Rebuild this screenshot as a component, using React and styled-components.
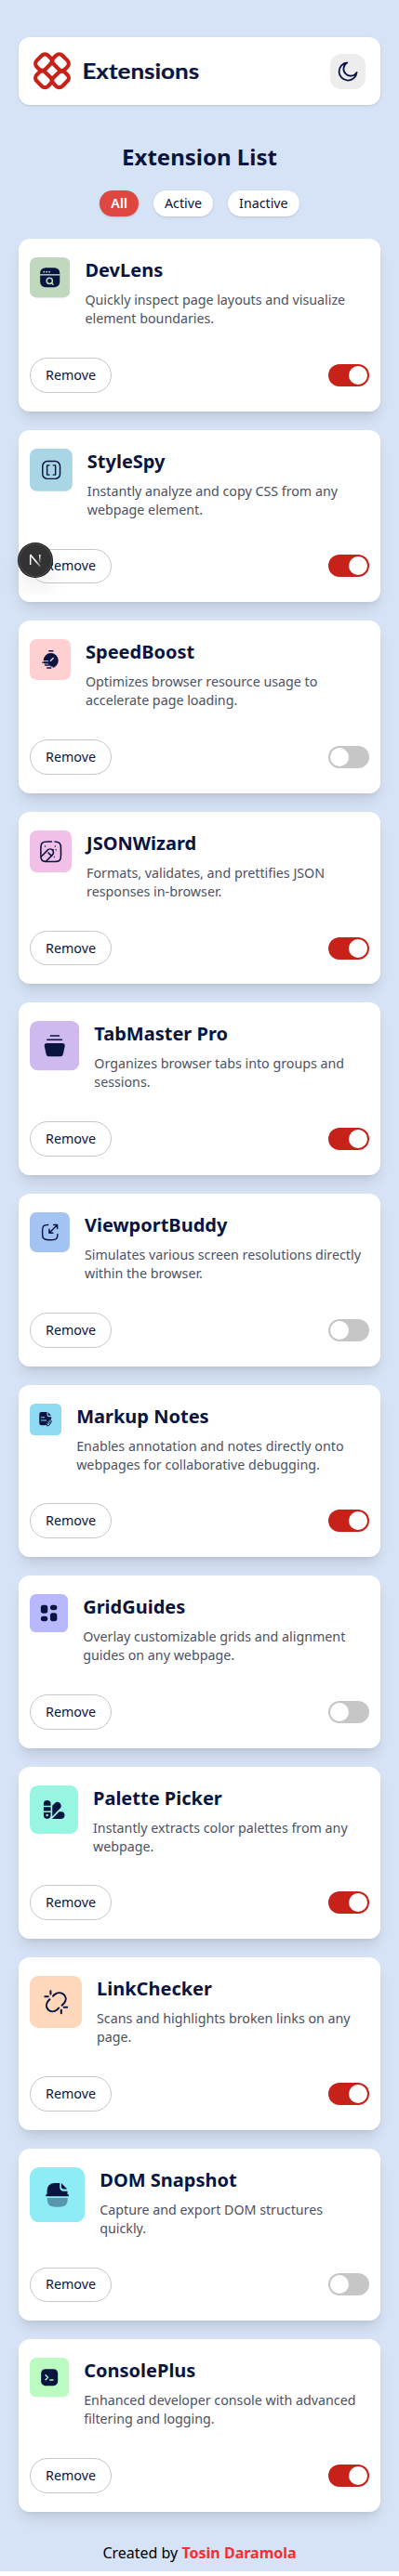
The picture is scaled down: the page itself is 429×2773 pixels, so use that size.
import React, { useState } from "react";
import styled, { createGlobalStyle } from "styled-components";

const NAVY = "#091540";

const GlobalStyle = createGlobalStyle`
  *, *::before, *::after { box-sizing: border-box; }
  body {
    margin: 0;
    background: #fff;
    font-family: "Noto Sans", sans-serif;
    line-height: 1.5;
  }
  h1, h2, p { margin: 0; }
  button { font: inherit; cursor: pointer; }
`;

const Page = styled.div`
  position: relative;
  min-height: 2768px;
  padding: 40px 20px 0;
  background: #d6e2f5;
`;

const Header = styled.header`
  display: flex;
  align-items: center;
  justify-content: space-between;
  height: 73px;
  padding: 0 16px;
  background: #fff;
  border-radius: 12px;
  box-shadow: 0 1px 3px rgba(0, 0, 0, 0.1), 0 1px 2px -1px rgba(0, 0, 0, 0.1);
`;

const ThemeButton = styled.button`
  display: grid;
  place-items: center;
  width: 38px;
  height: 38px;
  padding: 0;
  border: 0;
  border-radius: 12px;
  background: #ededed;
`;

const Title = styled.h1`
  margin-top: 40px;
  text-align: center;
  font-size: 24px;
  line-height: 32px;
  font-weight: 700;
  color: ${NAVY};
`;

const Filters = styled.nav`
  display: flex;
  justify-content: center;
  gap: 16px;
  margin-top: 20px;
`;

const FilterButton = styled.button`
  height: 28px;
  padding: 4px 12px;
  border: 0;
  border-radius: 16px;
  font-size: 14.25px;
  line-height: 20px;
  font-weight: ${(p) => (p.$selected ? 600 : 400)};
  color: ${(p) => (p.$selected ? "#fff" : NAVY)};
  background: ${(p) => (p.$selected ? "#de473f" : "#fff")};
  box-shadow: 0 1px 3px rgba(0, 0, 0, 0.1), 0 1px 2px -1px rgba(0, 0, 0, 0.1);
`;

const CardList = styled.main`
  display: flex;
  flex-direction: column;
  gap: 20px;
  margin-top: 24.3px;
`;

const Card = styled.article`
  display: flex;
  flex-direction: column;
  justify-content: space-between;
  height: 185.55px;
  padding: 20px 12px;
  background: #fff;
  border-radius: 12px;
  box-shadow: 0 10px 15px -3px rgba(0, 0, 0, 0.1), 0 4px 6px -4px rgba(0, 0, 0, 0.1);
`;

const CardTop = styled.div`
  display: flex;
  align-items: flex-start;
  gap: 16px;
`;

const Tile = styled.svg`
  flex: 0 1 60px;
  width: 60px;
  min-width: 0;
  height: auto;
  aspect-ratio: 1;
`;

const CardTitle = styled.h2`
  font-size: 20px;
  line-height: 28px;
  font-weight: 700;
  color: ${NAVY};
`;

const CardText = styled.p`
  margin-top: 8px;
  font-size: 14.25px;
  line-height: 20px;
  font-weight: 400;
  color: #4c5162;
`;

const CardBottom = styled.div`
  display: flex;
  align-items: center;
  justify-content: space-between;
`;

const RemoveButton = styled.button`
  height: 37.8px;
  padding: 0 16px;
  border: 1px solid #c6c6c6;
  border-radius: 20px;
  background: #fff;
  font-size: 14.3px;
  line-height: 20px;
  font-weight: 400;
  color: ${NAVY};
`;

const Switch = styled.button`
  display: flex;
  justify-content: ${(p) => (p.$on ? "flex-end" : "flex-start")};
  width: 44px;
  height: 24px;
  padding: 2px;
  border: 0;
  border-radius: 12px;
  background: ${(p) => (p.$on ? "#c7221a" : "#c6c6c6")};
`;

const Knob = styled.span`
  width: 20px;
  height: 20px;
  border-radius: 50%;
  background: #fff;
`;

const Footer = styled.footer`
  margin-top: 32px;
  text-align: center;
  font-size: 16px;
  line-height: 24px;
  color: #000;
`;

const Author = styled.span`
  font-weight: 700;
  color: #fb2c36;
`;

const DevOverlay = styled.div`
  position: absolute;
  inset: 0 0 auto 0;
  height: 640px;
  overflow: hidden;
  pointer-events: none;
`;

const DevBadge = styled.div`
  position: absolute;
  left: 20px;
  bottom: 19px;
  display: grid;
  place-items: center;
  width: 36px;
  height: 36px;
  border-radius: 50%;
  background: #333;
  box-shadow: 0 0 0 1px #171717, inset 0 0 0 1px rgba(255, 255, 255, 0.14),
    0 16px 32px -8px rgba(0, 0, 0, 0.24);
`;

const LogoRing = (props) => (
  <rect x="-8.6" y="-6.6" width="17.2" height="13.2" rx="4.8" fill="none" stroke="#c7221a" strokeWidth="4.2" {...props} />
);

const Logo = () => (
  <svg width="180" height="41" viewBox="0 0 180 41">
    <LogoRing transform="translate(10.9 11.1) rotate(-45)" />
    <LogoRing transform="translate(29.1 11.1) rotate(45)" />
    <LogoRing transform="translate(10.9 29.3) rotate(45)" />
    <LogoRing transform="translate(29.1 29.3) rotate(-45)" />
    <text x="52.4" y="29" textLength="125.8" lengthAdjust="spacingAndGlyphs" fontFamily="Lato, sans-serif" fontWeight="700" fontSize="23.5" fill={NAVY} stroke={NAVY} strokeWidth="0.2">
      Extensions
    </text>
  </svg>
);

const Moon = () => (
  <svg width="22" height="22" viewBox="0 0 22 22" fill="none" stroke={NAVY} strokeWidth="1.8" strokeLinecap="round" strokeLinejoin="round">
    <path d="M20.6 11.9A7.6 7.6 0 1 1 10.3 1.5a9.55 9.55 0 1 0 10.3 10.4Z" />
  </svg>
);

const stroke = { fill: "none", stroke: NAVY, strokeWidth: 2, strokeLinecap: "round", strokeLinejoin: "round" };

const items = [
  {
    name: "DevLens",
    text: "Quickly inspect page layouts and visualize element boundaries.",
    on: true,
    tile: "#c0d8be",
    icon: (
      <>
        <rect x="15.4" y="15.4" width="29.2" height="29.2" rx="8" fill={NAVY} />
        <path d="M15 26H45" stroke="#c0d8be" strokeWidth="1.9" />
        <g fill="#c0d8be">
          <circle cx="21.2" cy="21.6" r="1.3" />
          <circle cx="25.2" cy="21.6" r="1.3" />
          <circle cx="29.2" cy="21.6" r="1.3" />
        </g>
        <circle cx="29.4" cy="35" r="4.3" fill="none" stroke="#c0d8be" strokeWidth="2.1" />
        <path d="M32.4 38L34.6 40.4" stroke="#c0d8be" strokeWidth="2.1" strokeLinecap="round" />
      </>
    ),
  },
  {
    name: "StyleSpy",
    text: "Instantly analyze and copy CSS from any webpage element.",
    on: true,
    tile: "#a9d6e5",
    icon: (
      <g {...stroke} strokeWidth="1.9">
        <rect x="18" y="17.8" width="24.6" height="24.6" rx="6.8" />
        <path d="M27.6 23.4H24.4V36.8H27.6M33 23.4H36.2V36.8H33" />
      </g>
    ),
  },
  {
    name: "SpeedBoost",
    text: "Optimizes browser resource usage to accelerate page loading.",
    on: false,
    tile: "#ffcfd2",
    icon: (
      <>
        <circle cx="31" cy="31.5" r="11" fill={NAVY} />
        <path d="M30.6 31.8L34.4 28" stroke="#ffcfd2" strokeWidth="2" strokeLinecap="round" />
        <path d="M17 36.2H27L30.5 40.2H33.5L34 46H17Z" fill="#ffcfd2" />
        <path d="M18 32.4H27.5" stroke="#ffcfd2" strokeWidth="1.4" />
        <path d="M28.4 17.4H34M18.8 34.3H25.6M22.6 38.3H28M25.6 42.4H31" {...stroke} strokeWidth="2" />
      </>
    ),
  },
  {
    name: "JSONWizard",
    text: "Formats, validates, and prettifies JSON responses in-browser.",
    on: true,
    tile: "#f1c0e8",
    icon: (
      <g {...stroke} strokeWidth="2.1">
        <path d="M31.3 16H26C17.5 16 15.8 18 15.8 26V34.5C15.8 43 17.5 44.6 26 44.6H34.5C43 44.6 44.6 43 44.6 34.5V26C44.6 18.5 43 16.6 36 16" />
        <path d="M16 38L25.5 28.1A4.8 4.8 0 0 1 32.6 34.8L23.3 44.4M26.5 32L30 35.2" />
        <path d="M22 22.5V22.6M36.4 22.5V22.6M37.4 27.7V27.8M33.4 27.2V27.3M35.2 38V38.1" strokeWidth="2" />
      </g>
    ),
  },
  {
    name: "TabMaster Pro",
    text: "Organizes browser tabs into groups and sessions.",
    on: true,
    tile: "#cfbaf0",
    icon: (
      <>
        <path d="M25.3 18H35.3M21.3 22.8H38.6" {...stroke} strokeWidth="1.9" />
        <path d="M21 27H39.2Q43 27 42.4 30.6L40.3 40.5Q39.7 43 37.2 43H23Q20.5 43 19.9 40.5L17.8 30.6Q17.2 27 21 27Z" fill={NAVY} />
      </>
    ),
  },
  {
    name: "ViewportBuddy",
    text: "Simulates various screen resolutions directly within the browser.",
    on: false,
    tile: "#a3c4f3",
    icon: (
      <g {...stroke} strokeWidth="2">
        <path d="M27.6 18.8C20.6 18.8 19 20.5 19 28V32.5C19 39.5 21 41.5 28 41.5H33C40 41.5 41.8 40 41.8 33" />
        <path d="M41.4 18.8L29.2 31M35.8 18.8H41.4V24.4M29.2 25.4V31H34.8" />
      </g>
    ),
  },
  {
    name: "Markup Notes",
    text: "Enables annotation and notes directly onto webpages for collaborative debugging.",
    on: true,
    tile: "#90dbf4",
    icon: (
      <>
        <path d="M22 16H32.5V21Q32.5 25 36.5 25H40.8V29Q34 31 31 40.8H22Q18 40.8 18 36.8V20Q18 16 22 16Z" fill={NAVY} />
        <path d="M34.5 16.4L40.5 22.5H36Q34.5 22.5 34.5 21Z" fill={NAVY} />
        <path d="M22 25.8H27.5M22 31.8H31" stroke="#90dbf4" strokeWidth="1.8" strokeLinecap="round" />
        <path d="M33.2 38.2L37 31.6Q38.8 30.2 40.6 32Q41.4 33.4 40.4 35L36.8 40.8L33.4 42Z M36.8 37.5L38.4 34.5" {...stroke} strokeWidth="1.7" />
      </>
    ),
  },
  {
    name: "GridGuides",
    text: "Overlay customizable grids and alignment guides on any webpage.",
    on: false,
    tile: "#b8b8ff",
    icon: (
      <g fill={NAVY}>
        <rect x="17.3" y="17" width="10.8" height="13.4" rx="4" />
        <rect x="32" y="17" width="10.8" height="8.2" rx="4" />
        <rect x="17.3" y="34.6" width="10.8" height="8.2" rx="4" />
        <rect x="32" y="29.4" width="10.8" height="13.4" rx="4" />
      </g>
    ),
  },
  {
    name: "Palette Picker",
    text: "Instantly extracts color palettes from any webpage.",
    on: true,
    tile: "#98f5e1",
    icon: (
      <g fill={NAVY}>
        <path d="M17.2 25V22.6Q17.2 18.4 21.6 18.4T26 22.6V25ZM17.2 26.8H26V31.6H17.2ZM17.2 33.6H26V37Q26 41.4 21.6 41.4T17.2 37Z" />
        <circle cx="21.5" cy="37" r="1.4" fill="#98f5e1" />
        <path d="M28 25.2L31.2 21.9Q34.4 19.2 37.6 22.1Q40.4 25.3 37.8 28.4L28 38.4Z" />
        <path d="M27.6 41.4L36.6 32.7H39.2Q43.3 33 43.3 37Q43.3 41.1 39.2 41.4Z" />
      </g>
    ),
  },
  {
    name: "LinkChecker",
    text: "Scans and highlights broken links on any page.",
    on: true,
    tile: "#ffd7ba",
    icon: (
      <g {...stroke} strokeWidth="2.2">
        <path d="M26.8 23.2L28.5 21.5C36 15.6 45.6 24 39.6 31.4L37 34" />
        <path d="M23 27L21.3 28.8C15.2 36.4 24 45 31.6 38.8L33.4 37" />
        <path d="M24 17.3V21M17.5 23.8H21.2M36.2 39.4V43M39.3 36.2H43" />
      </g>
    ),
  },
  {
    name: "DOM Snapshot",
    text: "Capture and export DOM structures quickly.",
    on: false,
    tile: "#8eecf5",
    icon: (
      <>
        <path d="M18.8 29.6V26Q18.8 17.2 27.5 17.2H32.6V21.5Q32.6 26.2 37.3 26.2H41V29.6H42.2Q43 30.8 42.2 31.6H17.8Q17 30.8 17.8 29.6Z" fill={NAVY} />
        <path d="M34.3 17.3L40.8 23.8H37Q34.3 23.8 34.3 21.3Z" fill={NAVY} />
        <path d="M19 33.3H41.3V35Q41.3 43.2 33 43.2H27.3Q19 43.2 19 35Z" fill={NAVY} opacity="0.4" />
      </>
    ),
  },
  {
    name: "ConsolePlus",
    text: "Enhanced developer console with advanced filtering and logging.",
    on: true,
    tile: "#b9fbc0",
    icon: (
      <>
        <rect x="17.3" y="17.3" width="25.6" height="25.6" rx="6.6" fill={NAVY} />
        <path d="M24.2 26.6L27.8 30.2L24.2 33.8M31 34.2H35.6" fill="none" stroke="#b9fbc0" strokeWidth="2" strokeLinecap="round" strokeLinejoin="round" />
      </>
    ),
  },
];

const NextMark = () => (
  <svg width="14" height="16" viewBox="0 0 14 16" fill="none">
    <defs>
      <linearGradient id="diag" x1="8" y1="9.5" x2="13" y2="16" gradientUnits="userSpaceOnUse">
        <stop stopColor="#fff" />
        <stop offset="1" stopColor="#fff" stopOpacity="0.1" />
      </linearGradient>
      <linearGradient id="stem" x1="12" y1="3" x2="12" y2="11.5" gradientUnits="userSpaceOnUse">
        <stop stopColor="#fff" />
        <stop offset="1" stopColor="#fff" stopOpacity="0" />
      </linearGradient>
    </defs>
    <path d="M1.7 13V2.2" stroke="#fff" strokeWidth="1.5" />
    <path d="M1.5 2L12.4 15" stroke="url(#diag)" strokeWidth="1.6" />
    <path d="M11.8 2V11" stroke="url(#stem)" strokeWidth="1.5" />
  </svg>
);

function ExtensionCard({ item, on, onToggle }) {
  return (
    <Card>
      <CardTop>
        <Tile viewBox="0 0 60 60">
          <rect width="60" height="60" rx="10" fill={item.tile} />
          {item.icon}
        </Tile>
        <div>
          <CardTitle>{item.name}</CardTitle>
          <CardText>{item.text}</CardText>
        </div>
      </CardTop>
      <CardBottom>
        <RemoveButton>Remove</RemoveButton>
        <Switch $on={on} onClick={onToggle} aria-label={item.name}>
          <Knob />
        </Switch>
      </CardBottom>
    </Card>
  );
}

export default function App() {
  const [filter, setFilter] = useState("All");
  const [states, setStates] = useState(() => items.map((i) => i.on));
  const visible = (i) => filter === "All" || states[i] === (filter === "Active");

  return (
    <>
      <GlobalStyle />
      <Page>
        <Header>
          <Logo />
          <ThemeButton aria-label="Theme">
            <Moon />
          </ThemeButton>
        </Header>
        <Title>Extension List</Title>
        <Filters>
          {["All", "Active", "Inactive"].map((f) => (
            <FilterButton key={f} $selected={f === filter} onClick={() => setFilter(f)}>
              {f}
            </FilterButton>
          ))}
        </Filters>
        <CardList>
          {items.map((item, i) =>
            visible(i) ? (
              <ExtensionCard
                key={item.name}
                item={item}
                on={states[i]}
                onToggle={() => setStates((s) => s.map((v, j) => (j === i ? !v : v)))}
              />
            ) : null
          )}
        </CardList>
        <Footer>
          Created by <Author>Tosin Daramola</Author>
        </Footer>
        <DevOverlay>
          <DevBadge>
            <NextMark />
          </DevBadge>
        </DevOverlay>
      </Page>
    </>
  );
}
